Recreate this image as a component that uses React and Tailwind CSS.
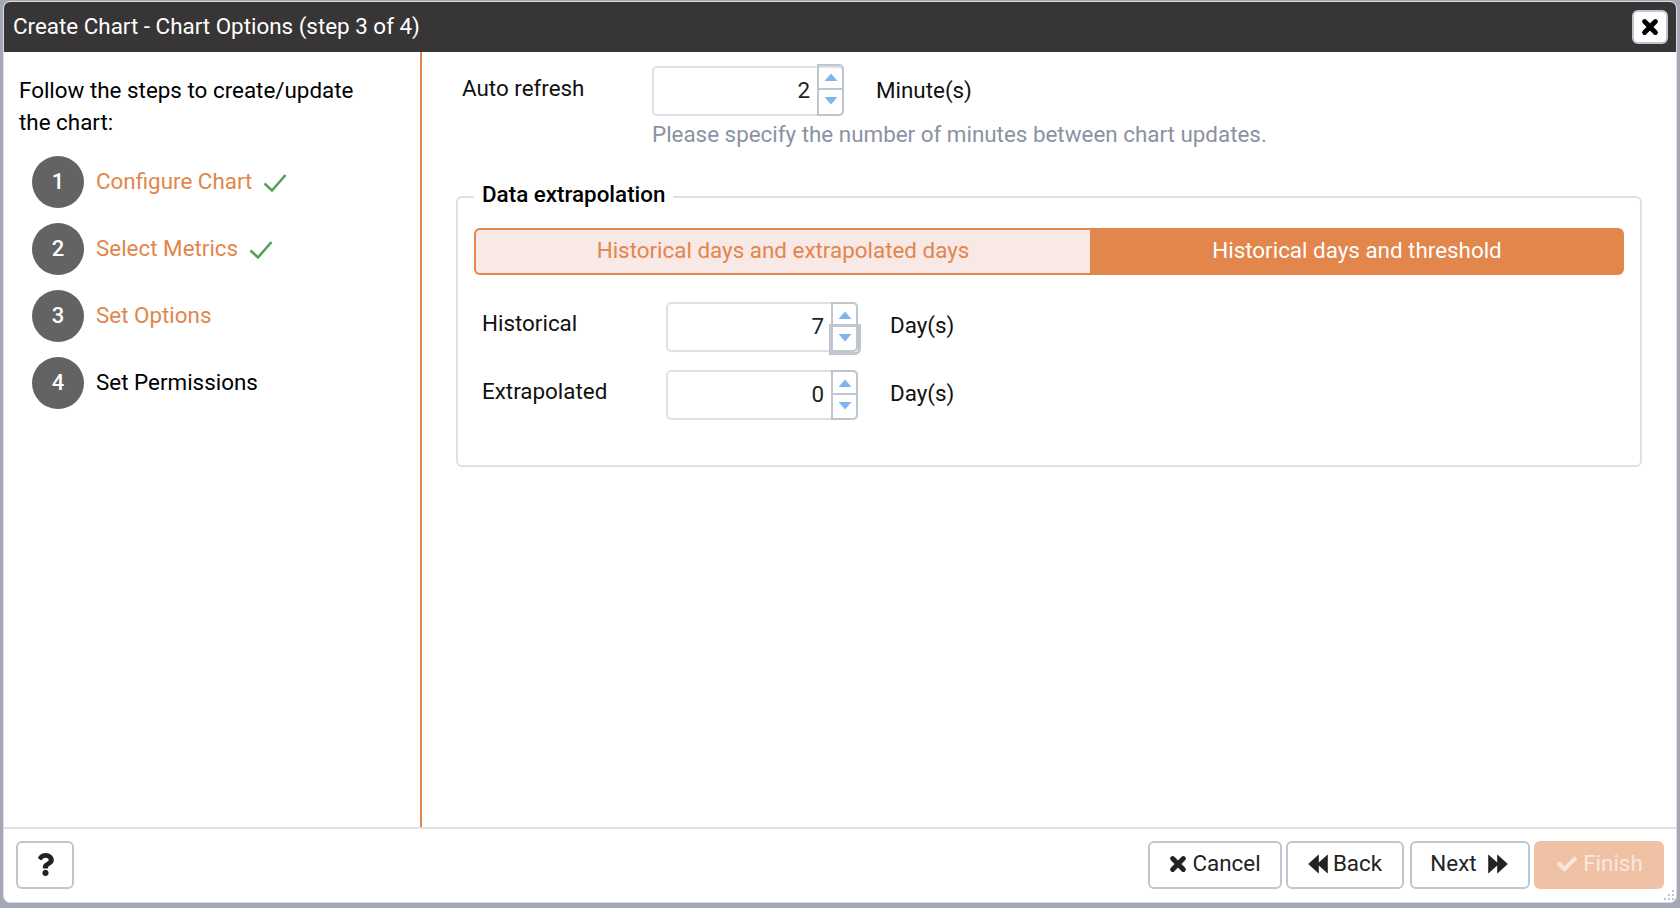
import React from "react";
import { FaCheck, FaQuestion } from "react-icons/fa";

const BOLD_X = "M4 4 L16 16 M16 4 L4 16";

function CrossIcon({ size, className }) {
  return (
    <svg width={size} height={size} viewBox="0 0 20 20" className={className}>
      <path d={BOLD_X} fill="none" stroke="currentColor" strokeWidth="5.5" strokeLinecap="round" />
    </svg>
  );
}

function Double({ forward, className }) {
  return (
    <svg width="20" height="20" viewBox="0 0 20 20" className={className}>
      <path
        d={forward ? "M0.5 1 L9.5 9 V1 L19.5 10 L9.5 19 V11 L0.5 19 Z" : "M19.5 1 L10.5 9 V1 L0.5 10 L10.5 19 V11 L19.5 19 Z"}
        fill="#222"
        stroke="#222"
        strokeWidth="0.6"
        strokeLinejoin="round"
      />
    </svg>
  );
}

function Arrow({ up }) {
  return (
    <svg width="14" height="8" viewBox="0 0 14 8" className="block">
      <path d={up ? "M0.5 8 L7 0.5 L13.5 8 Z" : "M0.5 0 L7 7.5 L13.5 0 Z"} fill="#7fb5ec" />
    </svg>
  );
}

function Spinner({ value, focus, raised }) {
  return (
    <div className="flex h-[50px] w-[192px] rounded-[5px] border-2 border-[#dde0e6] bg-white">
      <div className="flex-1 text-right pr-[7px] leading-[45px] text-[22.4px] text-[#222]">{value}</div>
      <div className={`w-[27px] ${raised ? "-mt-[4px]" : "-mt-[2px]"} -mb-[2px] -mr-[2px] flex flex-col rounded-r-[5px] border-2 border-[#c0c5d0]`}>
        <div className="flex-1 flex items-center justify-center border-b-2 border-[#c0c5d0]">
          <Arrow up />
        </div>
        <div className={`flex-1 flex items-center justify-center pb-[2px] ${focus ? "relative" : ""}`}>
          {focus && <div className="absolute -left-[4px] -right-[5px] -top-[3px] -bottom-[5px] rounded-br-[6px] border-[3px] border-[#c0c5d0]" />}
          <Arrow />
        </div>
      </div>
    </div>
  );
}

function Step({ n, label, orange, check, gap, mt }) {
  return (
    <div className={`flex items-center ${mt}`}>
      <div className="w-[52px] h-[52px] rounded-full bg-[#636363] flex items-center justify-center text-white text-[22px] font-medium pb-[2px]">{n}</div>
      <div className={`ml-[12px] text-[22.4px] ${orange ? "text-[#e2864b]" : "text-black"}`}>{label}</div>
      {check && (
        <svg width="24" height="20" viewBox="0 0 24 20" className={`${gap} mt-[1px]`}>
          <path d="M1.5 10.5 L9 17.5 L22.5 2" fill="none" stroke="#55a055" strokeWidth="2.6" />
        </svg>
      )}
    </div>
  );
}

function Btn({ children, width }) {
  return (
    <button className={`${width} h-[48px] pb-[2px] rounded-[6px] border-2 border-[#c0c5d0] bg-white text-[22.4px] text-[#222] flex items-center justify-center`}>
      {children}
    </button>
  );
}

export default function App() {
  return (
    <div className="w-[1680px] h-[908px] bg-[#a3a8b4] overflow-hidden font-['Roboto',sans-serif] pt-[1px] pl-[3px] pr-[3px] pb-[5px] relative">
      <div className="h-full rounded-[7px] border border-[#d8dbe1] bg-white flex flex-col overflow-hidden">
        <div className="h-[50px] shrink-0 bg-[#373535] flex items-center justify-between pl-[9px] pr-[8px]">
          <span className="text-white text-[22.4px]">Create Chart - Chart Options (step 3 of 4)</span>
          <button className="w-[36px] h-[34px] rounded-[6px] bg-white border-2 border-[#c0c5d0] flex items-center justify-center text-black">
            <CrossIcon size={18} />
          </button>
        </div>
        <div className="flex-1 flex min-h-0">
          <div className="w-[418px] shrink-0 border-r-2 border-[#e2864b] pl-[15px] pt-[22px]">
            <div className="text-[22.4px] leading-[32px] text-black w-[350px]">Follow the steps to create/update the chart:</div>
            <div className="ml-[13px] mt-[18px]">
              <Step n="1" label="Configure Chart" orange check gap="ml-[11px]" />
              <Step n="2" label="Select Metrics" orange check gap="ml-[11px]" mt="mt-[15px]" />
              <Step n="3" label="Set Options" orange mt="mt-[15px]" />
              <Step n="4" label="Set Permissions" mt="mt-[15px]" />
            </div>
          </div>
          <div className="flex-1 min-w-0 pl-[34px] pr-[34px] pt-[14px]">
            <div className="flex pl-[6px]">
              <div className="w-[190px] text-[22.4px] text-[#111] leading-[44px]">Auto refresh</div>
              <Spinner value="2" raised />
              <div className="ml-[32px] text-[22.4px] text-[#111] leading-[48px]">Minute(s)</div>
            </div>
            <div className="ml-[196px] mt-[3px] text-[22.4px] leading-[30px] text-[#8a92a3]">Please specify the number of minutes between chart updates.</div>
            <fieldset className="mt-[31px] h-[287px] rounded-[6px] border-2 border-[#dde0e6] pl-[16px] pr-[16px]">
              <legend className="px-[8px] pb-[6px] text-[22.4px] font-medium leading-[28px] text-black">Data extrapolation</legend>
              <div className="flex h-[47px] mt-[14px] rounded-[6px] text-[22.4px]">
                <div className="w-[616px] pb-[2px] rounded-l-[6px] border-2 border-r-0 border-[#e2864b] bg-[#f8e8e6] text-[#e2864b] flex items-center justify-center">Historical days and extrapolated days</div>
                <div className="flex-1 pb-[2px] rounded-r-[6px] bg-[#e2864b] text-white flex items-center justify-center">Historical days and threshold</div>
              </div>
              <div className="flex mt-[27px] pl-[8px]">
                <div className="w-[184px] text-[22.4px] text-[#111] leading-[43px]">Historical</div>
                <Spinner value="7" focus />
                <div className="ml-[32px] text-[22.4px] text-[#111] leading-[47px]">Day(s)</div>
              </div>
              <div className="flex mt-[18px] pl-[8px]">
                <div className="w-[184px] text-[22.4px] text-[#111] leading-[43px]">Extrapolated</div>
                <Spinner value="0" />
                <div className="ml-[32px] text-[22.4px] text-[#111] leading-[47px]">Day(s)</div>
              </div>
            </fieldset>
          </div>
        </div>
        <div className="h-[75px] shrink-0 border-t-2 border-[#dde0e6] flex items-start justify-between pl-[12px] pr-[12px] pt-[12px] relative">
          <Btn width="w-[58px]"><FaQuestion size={23} color="#222" /></Btn>
          <div className="flex gap-[4px]">
            <Btn width="w-[134px]"><CrossIcon size={18} className="mr-[5px]" />Cancel</Btn>
            <Btn width="w-[118px]"><Double className="mr-[5px]" />Back</Btn>
            <Btn width="w-[120px] ml-[2px]"><span className="-ml-[2px]">Next</span><Double forward className="ml-[11px]" /></Btn>
            <button className="w-[130px] h-[48px] pb-[2px] pl-[2px] rounded-[6px] bg-[#f0c2a5] text-[22.4px] text-[#f9e7dc] flex items-center justify-center">
              <FaCheck size={20} className="mr-[6px]" />Finish
            </button>
          </div>
          <svg width="12" height="12" viewBox="0 0 12 12" className="absolute right-[1px] bottom-[1px]">
            <g fill="#bfc3cc">
              <rect x="9" y="1" width="2" height="2" /><rect x="5" y="5" width="2" height="2" /><rect x="9" y="5" width="2" height="2" />
              <rect x="1" y="9" width="2" height="2" /><rect x="5" y="9" width="2" height="2" /><rect x="9" y="9" width="2" height="2" />
            </g>
          </svg>
        </div>
      </div>
    </div>
  );
}
